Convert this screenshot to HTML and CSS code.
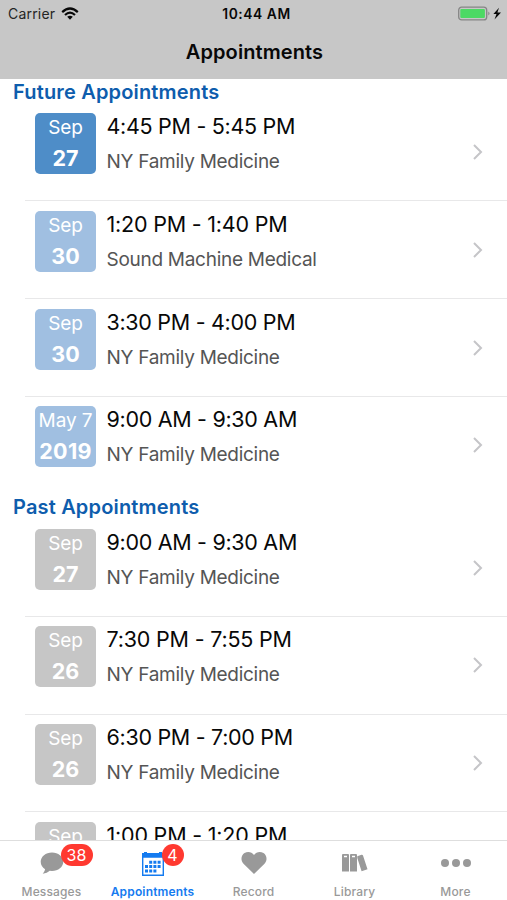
FILE: index.html
```html
<!DOCTYPE html>
<html lang="en">
<head>
<meta charset="utf-8">
<title>Appointments</title>
<link rel="stylesheet" href="styles.css">
</head>
<body>
<div class="screen">
  <header class="top">
    <div class="status">
      <div class="carrier"><span>Carrier</span>
        <svg width="18" height="13" viewBox="0 0 18 13" fill="none" stroke="#080808" stroke-width="2.2"><path d="M1.2 5.1Q9-2.1 16.8 5.1M4 8Q9 3.4 14 8"/><path d="M9 12.8 6.2 9.8Q9 7.5 11.8 9.8Z" fill="#080808" stroke="none"/></svg>
      </div>
      <div class="clock">10:44 AM</div>
      <div class="power">
        <svg width="45" height="16" viewBox="0 0 45 16"><rect x="1.7" y="1.2" width="28" height="12.7" rx="3" fill="#c7c7c7" stroke="#858585" stroke-width="1.3"/><rect x="3.3" y="3" width="24.6" height="9.1" rx="1" fill="#4cd964"/><path d="M31.3 5.5Q33.8 7.5 31.3 9.5Z" fill="#858585"/><path d="M42 1.7 36.4 8.1H39.5L37.5 13.6 44 6.4H40.4Z" fill="#080808"/></svg>
      </div>
    </div>
    <h1>Appointments</h1>
  </header>
  <main class="list">
    <section>
      <h2 class="first">Future Appointments</h2>
      <article class="row"><div class="date next"><span>Sep</span><b>27</b></div><div class="info"><p class="time">4:45 PM - 5:45 PM</p><p class="place">NY Family Medicine</p></div><svg class="chevron" viewBox="0 0 10 16"><path d="m1 1 7 7-7 7"/></svg></article>
      <article class="row"><div class="date future"><span>Sep</span><b>30</b></div><div class="info"><p class="time ones">1:20 PM - 1:40 PM</p><p class="place">Sound Machine Medical</p></div><svg class="chevron" viewBox="0 0 10 16"><path d="m1 1 7 7-7 7"/></svg></article>
      <article class="row"><div class="date future"><span>Sep</span><b>30</b></div><div class="info"><p class="time">3:30 PM - 4:00 PM</p><p class="place">NY Family Medicine</p></div><svg class="chevron" viewBox="0 0 10 16"><path d="m1 1 7 7-7 7"/></svg></article>
      <article class="row"><div class="date future"><span>May 7</span><b class="year">2019</b></div><div class="info"><p class="time">9:00 AM - 9:30 AM</p><p class="place">NY Family Medicine</p></div><svg class="chevron" viewBox="0 0 10 16"><path d="m1 1 7 7-7 7"/></svg></article>
    </section>
    <section>
      <h2>Past Appointments</h2>
      <article class="row"><div class="date past"><span>Sep</span><b>27</b></div><div class="info"><p class="time">9:00 AM - 9:30 AM</p><p class="place">NY Family Medicine</p></div><svg class="chevron" viewBox="0 0 10 16"><path d="m1 1 7 7-7 7"/></svg></article>
      <article class="row"><div class="date past"><span>Sep</span><b>26</b></div><div class="info"><p class="time ones">7:30 PM - 7:55 PM</p><p class="place">NY Family Medicine</p></div><svg class="chevron" viewBox="0 0 10 16"><path d="m1 1 7 7-7 7"/></svg></article>
      <article class="row"><div class="date past"><span>Sep</span><b>26</b></div><div class="info"><p class="time">6:30 PM - 7:00 PM</p><p class="place">NY Family Medicine</p></div><svg class="chevron" viewBox="0 0 10 16"><path d="m1 1 7 7-7 7"/></svg></article>
      <article class="row"><div class="date past"><span>Sep</span></div><div class="info"><p class="time ones">1:00 PM - 1:20 PM</p></div></article>
    </section>
  </main>
  <nav class="tabs">
    <div class="tab"><div class="icon"><svg width="24" height="23" viewBox="0 0 24 23"><path fill="currentColor" d="M12 .5C5.8.5.7 4.6.7 9.8c0 3 1.7 5.7 4.4 7.4-.4 1.8-1.3 3.2-2.4 4.6 3-.4 5.3-1.5 7-3l2.3.2c6.2 0 11.3-4.1 11.3-9.2S18.2.5 12 .5Z"/></svg><i class="badge wide">38</i></div><span>Messages</span></div>
    <div class="tab active"><div class="icon"><svg width="24" height="25" viewBox="0 0 24 25"><path fill="currentColor" fill-rule="evenodd" d="M1 2H3V1H6V2H18V1H21V2H23V25H1ZM2.4 6.8V23.6H21.6V6.8Z"/><path stroke="currentColor" stroke-width="3" stroke-dasharray="3 1.2" d="M8.2 11.2H19.8M4 15.6H19.8M4 20H15.6"/></svg><i class="badge round">4</i></div><span>Appointments</span></div>
    <div class="tab"><div class="icon"><svg width="26" height="24" viewBox="0 0 26 24"><path fill="currentColor" d="M13 23 2.5 12.7C-.8 9.4.2 4.3 3.5 2.1 6.8-.1 10.8.8 13 4c2.2-3.2 6.2-4.1 9.5-1.9 3.3 2.2 4.3 7.3 1 10.6Z"/></svg></div><span>Record</span></div>
    <div class="tab"><div class="icon"><svg width="26" height="20" viewBox="0 0 26 20"><path fill="currentColor" fill-rule="evenodd" d="M0 2Q0 1 1 1H6Q7 1 7 2V18.5H0ZM2 2.8V4.3H5V2.8ZM8 2Q8 1 9 1H14Q15 1 15 2V18.5H8ZM10 2.8V4.3H13V2.8ZM15.3 3.2 19.5 1.8Q20.6 1.5 21 2.5L25.5 16.3 19.6 18.3L15.3 5Z"/></svg></div><span>Library</span></div>
    <div class="tab"><div class="icon"><svg width="30" height="10" viewBox="0 0 30 10"><g fill="currentColor"><circle cx="4" cy="5" r="4"/><circle cx="15" cy="5" r="4"/><circle cx="26" cy="5" r="4"/></g></svg></div><span>More</span></div>
  </nav>
</div>
</body>
</html>
```
FILE: styles.css
```css
* { box-sizing: border-box; margin: 0; padding: 0; }
body { font-family: Inter, "Liberation Sans", sans-serif; background: #fff; color: #080808; }
.screen { width: 507px; height: 900px; display: flex; flex-direction: column; overflow: hidden; }
.top { height: 79px; background: #c7c7c7; flex: none; }
.status { height: 27px; display: grid; grid-template-columns: 1fr 1fr 1fr; align-items: center; padding: 0 5px 0 8px; font-size: 14px; }
.carrier { display: flex; align-items: center; gap: 6px; color: #252525; letter-spacing: .2px; }
.clock { text-align: center; font-weight: 600; font-size: 13.8px; letter-spacing: .55px; padding-left: 3px; }
.power { display: flex; justify-content: flex-end; }
h1 { font-size: 20px; line-height: 50px; font-weight: 600; text-align: center; letter-spacing: .1px; padding-left: 2px; }
.list { height: 761px; overflow: hidden; flex: none; }
h2 { height: 24.5px; padding-left: 13px; font-size: 20px; line-height: 25px; font-weight: 600; color: #0e5dad; white-space: nowrap; letter-spacing: .17px; }
.first { line-height: 27px; }
.row { height: 97.75px; margin-left: 25px; padding: 9.5px 24px 0 10px; border-bottom: 1.4px solid #e8e8e9; display: flex; }
.row:last-child { border-bottom: 0; }
.date { width: 61px; height: 61px; border-radius: 5px; color: #fff; text-align: center; display: flex; flex-direction: column; flex: none; white-space: nowrap; }
.date span { font-size: 19px; line-height: 30px; letter-spacing: -.1px; }
.date b { font-size: 21.5px; line-height: 30px; font-weight: 700; }
.date .year { letter-spacing: .3px; }
.next { background: #4e8dc8; }
.future { background: #a0bfe1; }
.past { background: #c6c6c6; }
.info { flex: 1; margin-left: 10.5px; white-space: nowrap; }
.time { font-size: 21.5px; line-height: 26.5px; letter-spacing: -.3px; }
.ones { letter-spacing: -.2px; }
.place { font-size: 19px; line-height: 29px; margin-top: 7.7px; color: #555; letter-spacing: -.28px; }
.chevron { width: 10px; height: 16px; margin-top: 31px; fill: none; stroke: #c5c5c8; stroke-width: 2; }
.tabs { height: 60px; padding-left: 1px; border-top: 1.4px solid #dedede; display: grid; grid-template-columns: repeat(5, 101px); flex: none; background: #fff; }
.tab { display: flex; flex-direction: column; align-items: center; color: #999; font-size: 12px; font-weight: 500; letter-spacing: .15px; }
.tab > span { line-height: 16px; margin-top: -1px; }
.icon { height: 44px; display: flex; align-items: center; position: relative; }
.active { color: #147bf0; font-weight: 600; }
.badge { position: absolute; top: 3px; height: 22px; border-radius: 11px; background: #ff3930; color: #fff; font-style: normal; font-weight: 400; font-size: 16px; line-height: 22px; text-align: center; letter-spacing: 0; }
.wide { left: 21px; width: 32px; }
.round { left: 21px; width: 22px; }
```
